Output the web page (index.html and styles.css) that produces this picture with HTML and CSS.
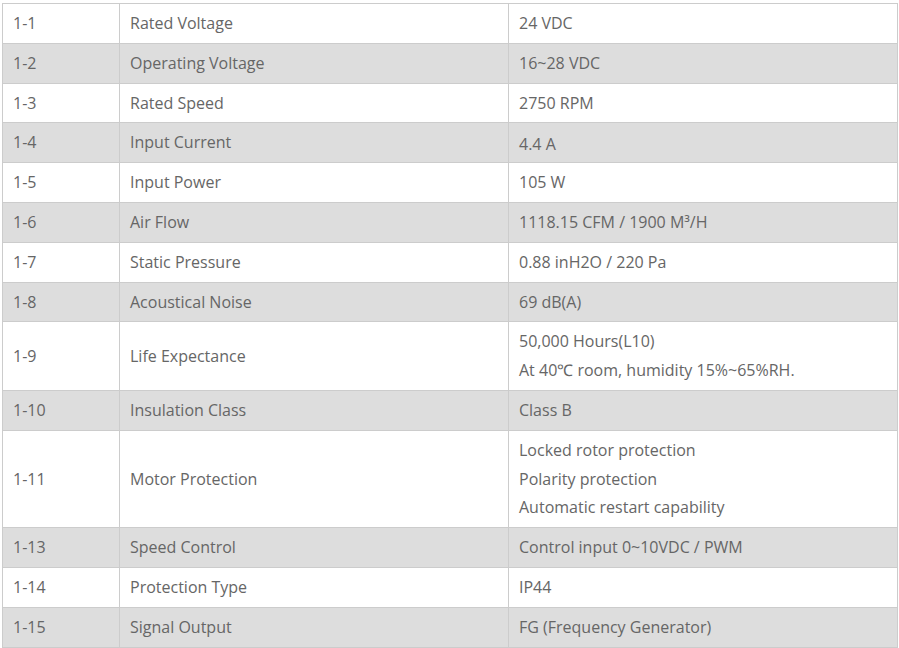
FILE: index.html
```html
<!DOCTYPE html>
<html lang="en">
<head>
<meta charset="utf-8">
<title>Specifications</title>
<link rel="stylesheet" href="styles.css">
</head>
<body>
<table class="spec">
  <colgroup>
    <col class="c-no">
    <col class="c-name">
    <col class="c-val">
  </colgroup>
  <tbody>
    <tr><td>1-1</td><td>Rated Voltage</td><td>24 VDC</td></tr>
    <tr><td>1-2</td><td>Operating Voltage</td><td>16~28 VDC</td></tr>
    <tr><td>1-3</td><td>Rated Speed</td><td>2750 RPM</td></tr>
    <tr><td>1-4</td><td>Input Current</td><td><span class="low">4.4 A</span></td></tr>
    <tr><td>1-5</td><td>Input Power</td><td>105 W</td></tr>
    <tr><td>1-6</td><td>Air Flow</td><td>1118.15 CFM / 1900 M³/H</td></tr>
    <tr><td>1-7</td><td>Static Pressure</td><td>0.88 inH2O / 220 Pa</td></tr>
    <tr><td>1-8</td><td>Acoustical Noise</td><td>69 dB(A)</td></tr>
    <tr><td>1-9</td><td>Life Expectance</td><td>50,000 Hours(L10)<br>At 40℃ room, humidity 15%~65%RH.</td></tr>
    <tr><td>1-10</td><td>Insulation Class</td><td>Class B</td></tr>
    <tr><td>1-11</td><td>Motor Protection</td><td>Locked rotor protection<br>Polarity protection<br>Automatic restart capability</td></tr>
    <tr><td>1-13</td><td>Speed Control</td><td>Control input 0~10VDC / PWM</td></tr>
    <tr><td>1-14</td><td>Protection Type</td><td>IP44</td></tr>
    <tr><td>1-15</td><td>Signal Output</td><td>FG (Frequency Generator)</td></tr>
  </tbody>
</table>
</body>
</html>
```
FILE: styles.css
```css
html, body {
  margin: 0;
  padding: 0;
  background: #fff;
}
body {
  padding: 3px 2px 0 2px;
  font-family: "Open Sans", "Liberation Sans", sans-serif;
  font-size: 16px;
  color: #666;
}
.spec {
  border-collapse: collapse;
  width: 895px;
  table-layout: fixed;
}
.c-no { width: 117px; }
.c-name { width: 389px; }
.c-val { width: 389px; }
.spec td {
  border: 1px solid #ccc;
  padding: 5px 10px 5px 10px;
  line-height: 28.8px;
  vertical-align: middle;
  text-align: left;
}
.spec tr:nth-child(even) td {
  background: #ddd;
}
.low {
  display: inline-block;
  transform: translateY(2px);
}
```
